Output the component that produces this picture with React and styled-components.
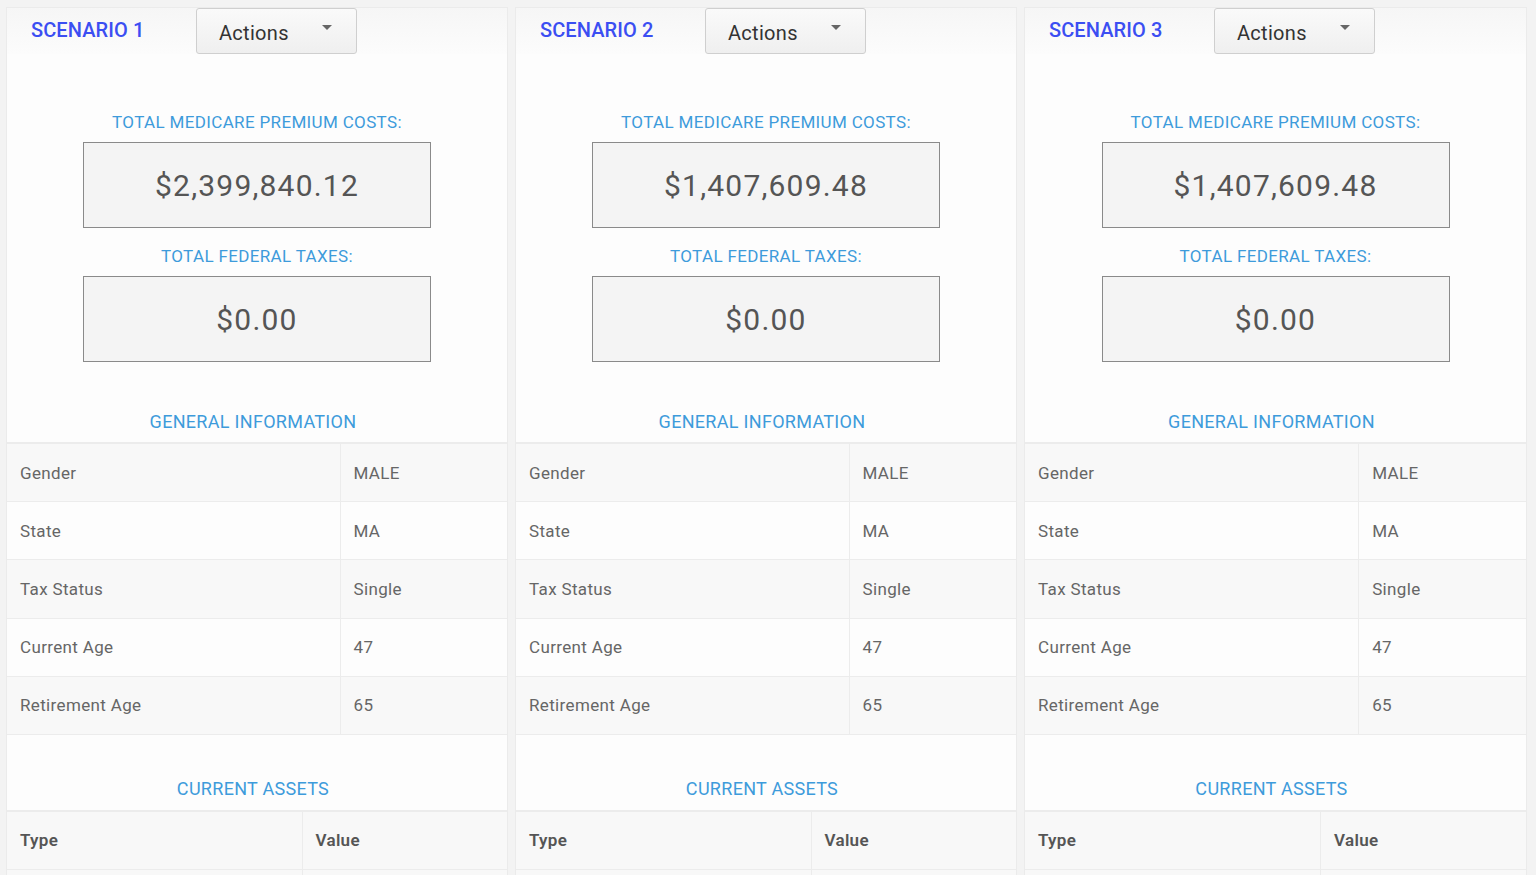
import styled, { createGlobalStyle } from "styled-components";

const GlobalStyle = createGlobalStyle`
  body {
    margin: 0;
    background: #f3f3f3;
    font-family: Roboto, "Noto Sans", "Liberation Sans", sans-serif;
  }
`;

const scenarios = [
  { id: 1, medicare: "$2,399,840.12", taxes: "$0.00" },
  { id: 2, medicare: "$1,407,609.48", taxes: "$0.00" },
  { id: 3, medicare: "$1,407,609.48", taxes: "$0.00" },
];

const general = [
  ["Gender", "MALE"],
  ["State", "MA"],
  ["Tax Status", "Single"],
  ["Current Age", "47"],
  ["Retirement Age", "65"],
];

function Caret() {
  return (
    <svg width="10" height="6" viewBox="0 0 10 6">
      <path d="M0 0 L10 0 L5 5 Z" fill="#666" />
    </svg>
  );
}

function ScenarioPanel({ scenario }) {
  return (
    <Panel>
      <Header>
        <Title>SCENARIO {scenario.id}</Title>
        <ActionsButton>
          <span>Actions</span>
          <Caret />
        </ActionsButton>
      </Header>

      <Totals>
        <Label>TOTAL MEDICARE PREMIUM COSTS:</Label>
        <ValueBox>{scenario.medicare}</ValueBox>
        <Label $gap={18}>TOTAL FEDERAL TAXES:</Label>
        <ValueBox>{scenario.taxes}</ValueBox>
      </Totals>

      <SectionTitle $top={48} $bottom={8}>GENERAL INFORMATION</SectionTitle>
      <Table>
        <tbody>
          {general.map(([name, value]) => (
            <tr key={name}>
              <Cell $width="66.6%">{name}</Cell>
              <Cell>{value}</Cell>
            </tr>
          ))}
        </tbody>
      </Table>

      <SectionTitle $top={42} $bottom={9}>CURRENT ASSETS</SectionTitle>
      <Table>
        <thead>
          <tr>
            <HeadCell $width="59%">Type</HeadCell>
            <HeadCell>Value</HeadCell>
          </tr>
        </thead>
        <tbody>
          <tr>
            <Cell>&nbsp;</Cell>
            <Cell>&nbsp;</Cell>
          </tr>
        </tbody>
      </Table>
    </Panel>
  );
}

export default function App() {
  return (
    <>
      <GlobalStyle />
      <Page>
        {scenarios.map((s) => (
          <ScenarioPanel key={s.id} scenario={s} />
        ))}
      </Page>
    </>
  );
}

const Page = styled.div`
  display: grid;
  grid-template-columns: 502px 502px 503px;
  column-gap: 7px;
  padding: 7px 0 0 6px;
  height: 868px;
  overflow: hidden;
`;

const Panel = styled.div`
  background: #fdfdfd;
  border: 1px solid #ebebeb;
  display: flex;
  flex-direction: column;
`;

const Header = styled.div`
  display: flex;
  align-items: flex-start;
  height: 46px;
  padding-left: 24px;
  background: linear-gradient(#f6f6f6, #fcfcfc);
`;

const Title = styled.h2`
  margin: 10px 0 0;
  width: 165px;
  font-size: 20px;
  font-weight: 500;
  color: #3b4ef2;
  letter-spacing: 0.1px;
`;

const ActionsButton = styled.button`
  width: 161px;
  height: 46px;
  display: flex;
  align-items: center;
  justify-content: space-between;
  padding: 3px 24px 0 22px;
  border: 1px solid #cfcfcf;
  border-radius: 3px;
  background: linear-gradient(#fafafa, #efefef);
  font-family: inherit;
  font-size: 20px;
  color: #333;
  letter-spacing: 0.3px;
  cursor: pointer;

  svg {
    margin-top: -10px;
  }
`;

const Totals = styled.div`
  display: flex;
  flex-direction: column;
  align-items: center;
  padding-top: 58px;
`;

const Label = styled.div`
  margin-top: ${(p) => p.$gap || 0}px;
  margin-bottom: 10px;
  font-size: 17px;
  line-height: 20px;
  color: #3d9bdb;
  letter-spacing: 0.35px;
`;

const ValueBox = styled.div`
  width: 346px;
  height: 84px;
  border: 1px solid #8a8a8a;
  background: #f4f4f4;
  display: flex;
  align-items: center;
  justify-content: center;
  font-size: 30px;
  color: #555;
  letter-spacing: 1.2px;
`;

const SectionTitle = styled.div`
  margin-top: ${(p) => p.$top}px;
  padding-right: 8px;
  padding-bottom: ${(p) => p.$bottom}px;
  text-align: center;
  font-size: 18px;
  line-height: 24px;
  color: #3d9bdb;
  letter-spacing: 0.3px;
`;

const Table = styled.table`
  width: 100%;
  border-collapse: collapse;
  border-top: 2px solid #ececec;

  tbody tr:nth-child(odd) {
    background: #f8f8f8;
  }
  tbody tr:nth-child(even) {
    background: #fdfdfd;
  }
`;

const Cell = styled.td`
  width: ${(p) => p.$width || "auto"};
  height: 57.2px;
  padding: 0 13px;
  border: 1px solid #ececec;
  border-top: none;
  font-size: 17px;
  color: #666;
  letter-spacing: 0.35px;
  &:first-child {
    border-left: none;
  }
  &:last-child {
    border-right: none;
  }
`;

const HeadCell = styled.th`
  width: ${(p) => p.$width || "auto"};
  height: 57px;
  padding: 0 13px;
  text-align: left;
  border: 1px solid #ececec;
  border-top: none;
  background: #f8f8f8;
  font-size: 17px;
  font-weight: 600;
  color: #555;
  letter-spacing: 0.3px;
  &:first-child {
    border-left: none;
  }
  &:last-child {
    border-right: none;
  }
`;
